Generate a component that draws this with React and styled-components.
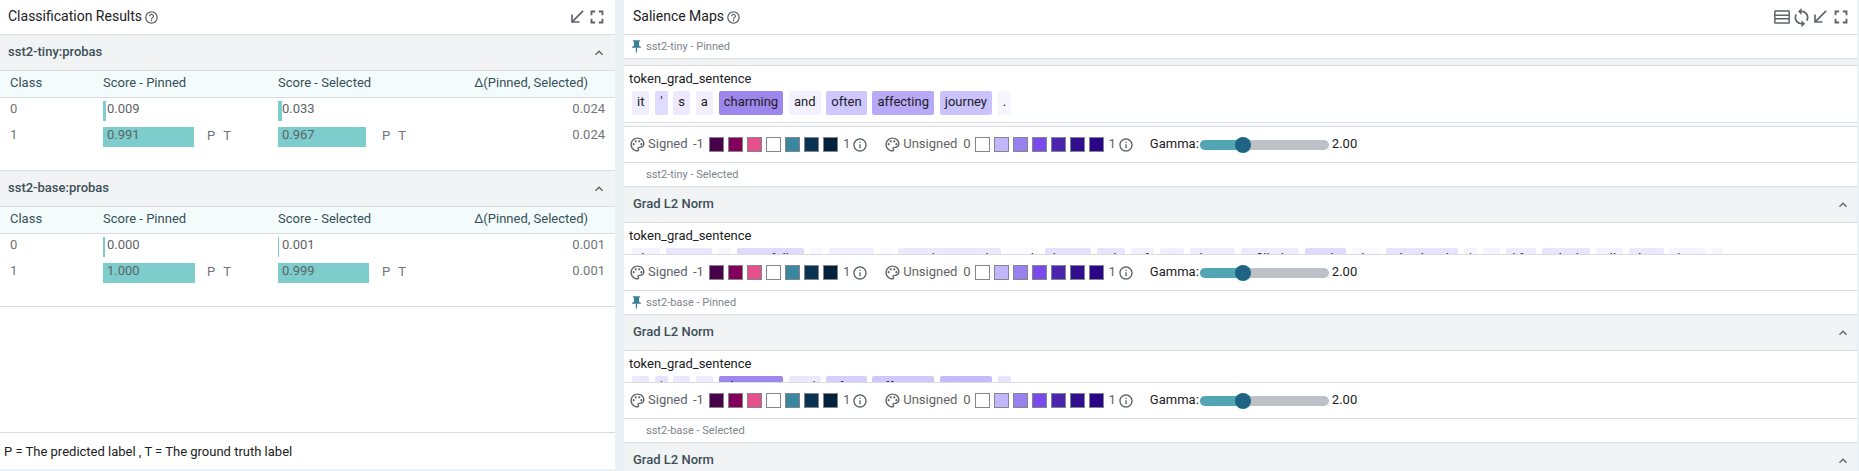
import React from "react";
import styled, { createGlobalStyle } from "styled-components";

const Global = createGlobalStyle`
  html, body { margin: 0; padding: 0; height: 100%; overflow: hidden; }
  body { font-family: Roboto, "Liberation Sans", sans-serif; background: #e9f1f4; color: #202124; }
`;

const Page = styled.div`
  display: flex;
  height: 471px;
  width: 1859px;
  background: #e9f1f4;
`;
const LeftPanel = styled.section`
  width: 615px;
  height: 469px;
  flex: none;
  display: flex;
  flex-direction: column;
  background: #fff;
`;
const RightPanel = styled.section`
  width: 1233px;
  height: 471px;
  margin-left: 9px;
  flex: none;
  display: flex;
  flex-direction: column;
  overflow: hidden;
  background: #fff;
`;
const ModuleHeader = styled.header`
  height: 34px;
  flex: none;
  display: flex;
  align-items: center;
  padding: 0 ${p => p.$right}px 0 ${p => p.$left}px;
  border-bottom: 1px solid #dadce0;
`;
const Title = styled.h2`
  margin: 0 2px 2px 0;
  font-size: 14px;
  font-weight: 400;
  color: #202124;
`;
const Spacer = styled.div`flex: 1;`;
const Glyph = styled.svg`
  width: ${p => p.$size}px;
  height: ${p => p.$size}px;
  flex: none;
  fill: ${p => p.$color || "#5f6368"};
  margin-left: ${p => p.$ml || 0}px;
  margin-right: ${p => p.$mr || 0}px;
`;

const SectionHeader = styled.div`
  height: 35px;
  flex: none;
  display: flex;
  align-items: center;
  justify-content: space-between;
  padding: 0 ${p => p.$pr}px 0 ${p => p.$pl}px;
  background: #f1f3f4;
  border-bottom: 1px solid #dadce0;
  font-size: 13px;
  font-weight: 500;
  color: #3c4f58;
`;
const SectionName = styled.span`
  margin-bottom: 2px;
`;
const TableHead = styled.div`
  height: 26px;
  box-sizing: border-box;
  flex: none;
  display: grid;
  grid-template-columns: 93px 175px 1fr auto;
  align-items: center;
  padding: 0 27px 3px 10px;
  background: #f3fbfb;
  border-bottom: 1px solid #dadce0;
  box-sizing: content-box;
  font-size: 13px;
  color: #37505a;
  height: 23px;
`;
const HeadCell = styled.div`
  white-space: nowrap;
`;
const TableBody = styled.div`
  height: 69px;
  flex: none;
  padding-top: 3px;
  display: flex;
  flex-direction: column;
  gap: 6px;
  border-bottom: 1px solid #dadce0;
`;
const Row = styled.div`
  height: 20px;
  display: grid;
  grid-template-columns: 93px 175px 1fr auto;
  padding: 0 10px;
  font-size: 13px;
  line-height: 15px;
  color: #5f6368;
`;
const ClassCell = styled.div`
  color: #70757a;
`;
const ScoreCell = styled.div`
  display: flex;
`;
const BarBox = styled.div`
  position: relative;
  width: 92px;
  height: 20px;
  flex: none;
  padding-left: 4px;
  box-sizing: border-box;
  color: #5f6368;
`;
const BarFill = styled.div`
  position: absolute;
  left: 0;
  top: 0;
  bottom: 0;
  background: #7dcdcd;
`;
const BarText = styled.span`
  position: relative;
`;
const Mark = styled.span`
  margin-left: ${p => p.$ml}px;
  line-height: 17px;
  color: #70757a;
`;
const Delta = styled.div`
  color: #70757a;
`;
const Fill = styled.div`flex: 1;`;
const Footer = styled.div`
  height: 36px;
  flex: none;
  display: flex;
  align-items: center;
  padding-left: 4px;
  border-top: 1px solid #dadce0;
  font-size: 13px;
  color: #202124;
`;

const ModelLabel = styled.div`
  height: 23px;
  flex: none;
  display: flex;
  align-items: center;
  padding-left: ${p => p.$pl}px;
  border-bottom: 1px solid #dadce0;
  font-size: 11px;
  color: #80868b;
`;
const Collapsed = styled.div`
  height: ${p => p.$h}px;
  flex: none;
  background: ${p => p.$bg};
  border-bottom: 1px solid #dadce0;
`;
const TokenBlock = styled.div`
  height: ${p => p.$h}px;
  flex: none;
  overflow: hidden;
  box-sizing: border-box;
  padding: 4px 5px 0;
  border-bottom: 1px solid #dadce0;
`;
const FieldName = styled.div`
  font-size: 13px;
  line-height: 17px;
  color: #202124;
`;
const Tokens = styled.div`
  display: flex;
  gap: ${p => p.$gap}px;
  margin-top: 4px;
  padding-left: 3px;
`;
const Token = styled.span`
  flex: none;
  height: 24px;
  line-height: 21px;
  padding: 0 5px;
  box-sizing: border-box;
  text-align: center;
  border-radius: 2px;
  font-size: 13px;
  color: #202124;
  background: ${p => p.$bg};
  width: ${p => p.$w}px;
  overflow: hidden;
`;
const Controls = styled.div`
  height: 35px;
  flex: none;
  display: flex;
  align-items: center;
  padding-left: 5px;
  border-bottom: 1px solid #dadce0;
  font-size: 13px;
  color: #5f6368;
`;
const LegendName = styled.span`
  margin: 0 0 2px 2px;
  width: ${p => p.$w}px;
`;
const LegendEnd = styled.span`
  margin: 0 ${p => p.$mr}px 2px ${p => p.$ml}px;
`;
const Swatches = styled.div`
  display: flex;
  gap: 4px;
`;
const Swatch = styled.div`
  width: 15px;
  height: 15px;
  box-sizing: border-box;
  border: 1px solid #80868b;
  background: ${p => p.$c};
`;
const GammaLabel = styled.span`
  margin: 0 0 2px 16px;
  width: 48px;
  color: #202124;
`;
const Track = styled.div`
  position: relative;
  width: 129px;
  height: 10px;
  margin: 0 3px 0 2px;
  border-radius: 5px;
  background: #bdc1c6;
`;
const TrackFill = styled.div`
  width: 43px;
  height: 10px;
  border-radius: 5px 0 0 5px;
  background: #52a6b3;
`;
const Thumb = styled.div`
  position: absolute;
  left: 35px;
  top: -3px;
  width: 16px;
  height: 16px;
  border-radius: 50%;
  background: #1f6485;
`;
const GammaValue = styled.span`
  margin-bottom: 2px;
  color: #202124;
`;

const Icon = ({ d, size = 14, color, ml, mr, children }) => (
  <Glyph viewBox="0 0 24 24" $size={size} $color={color} $ml={ml} $mr={mr}>
    {d && <path d={d} />}
    {children}
  </Glyph>
);

const P = {
  help: "M11 18h2v-2h-2v2zm1-16C6.48 2 2 6.48 2 12s4.48 10 10 10 10-4.48 10-10S17.52 2 12 2zm0 18c-4.41 0-8-3.59-8-8s3.59-8 8-8 8 3.59 8 8-3.59 8-8 8zm0-14c-2.21 0-4 1.79-4 4h2c0-1.1.9-2 2-2s2 .9 2 2c0 2-3 1.75-3 5h2c0-2.25 3-2.5 3-5 0-2.21-1.79-4-4-4z",
  min: "M20 5.41L18.59 4 7 15.59V9H5v10h10v-2H8.41z",
  full: "M7 14H5v5h5v-2H7v-3zm-2-4h2V7h3V5H5v5zm12 7h-3v2h5v-5h-2v3zM14 5v2h3v3h2V5h-5z",
  less: "M12 8l-6 6 1.41 1.41L12 10.83l4.59 4.58L18 14z",
  pin: "M16 9V4h1c.55 0 1-.45 1-1s-.45-1-1-1H7c-.55 0-1 .45-1 1s.45 1 1 1h1v5c0 1.66-1.34 3-3 3v2h5.97v7l1 1 1-1v-7H19v-2c-1.66 0-3-1.34-3-3z",
  sync: "M12 4V1L8 5l4 4V6c3.31 0 6 2.69 6 6 0 1.01-.25 1.97-.7 2.8l1.46 1.46C19.54 15.03 20 13.57 20 12c0-4.42-3.58-8-8-8zm0 14c-3.31 0-6-2.69-6-6 0-1.01.25-1.97.7-2.8L5.24 7.74C4.46 8.97 4 10.43 4 12c0 4.42 3.58 8 8 8v3l4-4-4-4v3z",
  info: "M11 7h2v2h-2zm0 4h2v6h-2zm1-9C6.48 2 2 6.48 2 12s4.48 10 10 10 10-4.48 10-10S17.52 2 12 2zm0 18c-4.41 0-8-3.59-8-8s3.59-8 8-8 8 3.59 8 8-3.59 8-8 8z",
  palette: "M12 22C6.49 22 2 17.51 2 12S6.49 2 12 2s10 4.04 10 9c0 3.31-2.69 6-6 6h-1.77c-.28 0-.5.22-.5.5 0 .12.05.23.13.33.41.47.64 1.06.64 1.67 0 1.38-1.12 2.5-2.5 2.5zm0-18c-4.41 0-8 3.59-8 8s3.59 8 8 8c.28 0 .5-.22.5-.5 0-.16-.08-.28-.14-.35-.41-.46-.63-1.05-.63-1.65 0-1.38 1.12-2.5 2.5-2.5H16c2.21 0 4-1.79 4-4 0-3.86-3.59-7-8-7z",
  rows: "M4 4h16a1.5 1.5 0 0 1 1.5 1.5v13A1.5 1.5 0 0 1 20 20H4a1.5 1.5 0 0 1-1.5-1.5v-13A1.5 1.5 0 0 1 4 4zm.3 1.8v3.3h15.4V5.8zm0 5.1v2.3h15.4v-2.3zm0 4.1v3.2h15.4V15z",
};

const PaletteIcon = ({ ml }) => (
  <Icon d={P.palette} size={17} color="#5f6368" ml={ml}>
    <circle cx="6.5" cy="11.5" r="1.5" />
    <circle cx="9.5" cy="7.5" r="1.5" />
    <circle cx="14.5" cy="7.5" r="1.5" />
    <circle cx="17.5" cy="11.5" r="1.5" />
  </Icon>
);

const SIGNED = ["#49004b", "#820059", "#e5508a", "#ffffff", "#3a879f", "#0b3351", "#02213a"];
const UNSIGNED = ["#ffffff", "#c3b6fb", "#9a7fee", "#7a4be8", "#4d24ad", "#320d90", "#2a0587"];

const LegendControls = () => (
  <Controls>
    <PaletteIcon />
    <LegendName $w={39}>Signed</LegendName>
    <LegendEnd $ml={6} $mr={5}>-1</LegendEnd>
    <Swatches>{SIGNED.map(c => <Swatch key={c} $c={c} />)}</Swatches>
    <LegendEnd $ml={5} $mr={2}>1</LegendEnd>
    <Icon d={P.info} size={16} />
    <PaletteIcon ml={16} />
    <LegendName $w={53}>Unsigned</LegendName>
    <LegendEnd $ml={7} $mr={4}>0</LegendEnd>
    <Swatches>{UNSIGNED.map(c => <Swatch key={c} $c={c} />)}</Swatches>
    <LegendEnd $ml={5} $mr={2}>1</LegendEnd>
    <Icon d={P.info} size={16} />
    <GammaLabel>Gamma:</GammaLabel>
    <Track>
      <TrackFill />
      <Thumb />
    </Track>
    <GammaValue>2.00</GammaValue>
  </Controls>
);

const Score = ({ value, width, marks }) => (
  <ScoreCell>
    <BarBox>
      <BarFill style={{ width }} />
      <BarText>{value}</BarText>
    </BarBox>
    {marks && <Mark $ml={12}>P</Mark>}
    {marks && <Mark $ml={8}>T</Mark>}
  </ScoreCell>
);

const ResultTable = ({ name, rows }) => (
  <>
    <SectionHeader $pl={8} $pr={8}>
      <SectionName>{name}</SectionName>
      <Icon d={P.less} size={16} color="#5f6368" />
    </SectionHeader>
    <TableHead>
      <HeadCell>Class</HeadCell>
      <HeadCell>Score - Pinned</HeadCell>
      <HeadCell>Score - Selected</HeadCell>
      <HeadCell>Δ(Pinned, Selected)</HeadCell>
    </TableHead>
    <TableBody>
      {rows.map(r => (
        <Row key={r.cls}>
          <ClassCell>{r.cls}</ClassCell>
          <Score value={r.a} width={r.aw} marks={r.marks} />
          <Score value={r.b} width={r.bw} marks={r.marks} />
          <Delta>{r.d}</Delta>
        </Row>
      ))}
    </TableBody>
  </>
);

const GroupHeader = () => (
  <SectionHeader $pl={9} $pr={6}>
    <SectionName>Grad L2 Norm</SectionName>
    <Icon d={P.less} size={16} />
  </SectionHeader>
);

const SENT = [
  ["it", "#f0edff"], ["'", "#e0dcff"], ["s", "#ebe8ff"], ["a", "#f0eeff"], ["charming", "#9d87ec"],
  ["and", "#f3f1ff"], ["often", "#cfc7ff"], ["affecting", "#b8aaf7"], ["journey", "#cbc3fe"], [".", "#f7f6ff"],
];
const SENT2 = [
  ["it", "#ece9ff"], ["'", "#e5e1ff"], ["s", "#ebe8ff"], ["a", "#eeebff"], ["charming", "#9d87ec"],
  ["and", "#ece9ff"], ["often", "#d6cffe"], ["affecting", "#d0c8fb"], ["journey", "#c5bbf9"], [".", "#e8e4ff"],
];
const LONG = [
  ["the", 28, "#f5f3ff"], ["movie", 46, "#e9e5ff"], ["is", 13, "#f7f6ff"], ["painfully", 67, "#e0daff"], ["a", 13, "#f9f8ff"],
  ["more", 45, "#f0eeff"], ["-", 12, "#f9f8ff"], ["sophisticated", 103, "#ece9ff"], ["and", 32, "#fafaff"], ["bitter", 46, "#e4e0ff"],
  ["tale", 28, "#e8e4ff"], ["of", 23, "#f2f0ff"], ["its", 24, "#f0edff"], ["lives", 45, "#eeebff"], ["filled", 58, "#eeebff"],
  ["with", 41, "#dfdaff"], ["the", 28, "#faf9ff"], ["dead-end", 72, "#e7e3ff"], ["'", 13, "#f5f3ff"], ["s", 17, "#f5f3ff"],
  ["life", 30, "#eeebff"], ["which", 48, "#e9e5ff"], ["all", 27, "#f3f1ff"], ["then", 35, "#ece9ff"], ["hits", 36, "#f5f3ff"], [".", 11, "#f7f6ff"],
];

export default function App() {
  return (
    <Page>
      <Global />
      <LeftPanel>
        <ModuleHeader $left={8} $right={7}>
          <Title>Classification Results</Title>
          <Icon d={P.help} size={15} />
          <Spacer />
          <Icon d={P.min} size={20} />
          <Icon d={P.full} size={22} ml={-1} />
        </ModuleHeader>
        <ResultTable
          name="sst2-tiny:probas"
          rows={[
            { cls: "0", a: "0.009", aw: 3, b: "0.033", bw: 4, d: "0.024" },
            { cls: "1", a: "0.991", aw: 91, b: "0.967", bw: 88, d: "0.024", marks: true },
          ]}
        />
        <ResultTable
          name="sst2-base:probas"
          rows={[
            { cls: "0", a: "0.000", aw: 2, b: "0.001", bw: 1, d: "0.001" },
            { cls: "1", a: "1.000", aw: 92, b: "0.999", bw: 91, d: "0.001", marks: true },
          ]}
        />
        <Fill />
        <Footer>P = The predicted label , T = The ground truth label</Footer>
      </LeftPanel>
      <RightPanel>
        <ModuleHeader $left={9} $right={5}>
          <Title>Salience Maps</Title>
          <Icon d={P.help} size={15} />
          <Spacer />
          <Icon d={P.rows} size={20} />
          <Icon d={P.sync} size={21} ml={-1} />
          <Icon d={P.min} size={20} ml={-2} />
          <Icon d={P.full} size={22} />
        </ModuleHeader>
        <ModelLabel $pl={5}>
          <Icon d={P.pin} size={15} color="#3a7f95" mr={2} />
          sst2-tiny - Pinned
        </ModelLabel>
        <Collapsed $h={6} $bg="#f1f3f4" />
        <TokenBlock $h={57}>
          <FieldName>token_grad_sentence</FieldName>
          <Tokens $gap={5.8}>{SENT.map(([t, c]) => <Token key={t} $bg={c}>{t}</Token>)}</Tokens>
        </TokenBlock>
        <Collapsed $h={3} $bg="#f8f9fa" />
        <LegendControls />
        <ModelLabel $pl={22}>sst2-tiny - Selected</ModelLabel>
        <GroupHeader />
        <TokenBlock $h={32}>
          <FieldName>token_grad_sentence</FieldName>
          <Tokens $gap={6}>{LONG.map(([t, w, c], i) => <Token key={i} $w={w} $bg={c}>{t}</Token>)}</Tokens>
        </TokenBlock>
        <LegendControls />
        <ModelLabel $pl={5}>
          <Icon d={P.pin} size={15} color="#3a7f95" mr={2} />
          sst2-base - Pinned
        </ModelLabel>
        <GroupHeader />
        <TokenBlock $h={32}>
          <FieldName>token_grad_sentence</FieldName>
          <Tokens $gap={5.8}>{SENT2.map(([t, c]) => <Token key={t} $bg={c}>{t}</Token>)}</Tokens>
        </TokenBlock>
        <LegendControls />
        <ModelLabel $pl={22}>sst2-base - Selected</ModelLabel>
        <GroupHeader />
      </RightPanel>
    </Page>
  );
}
